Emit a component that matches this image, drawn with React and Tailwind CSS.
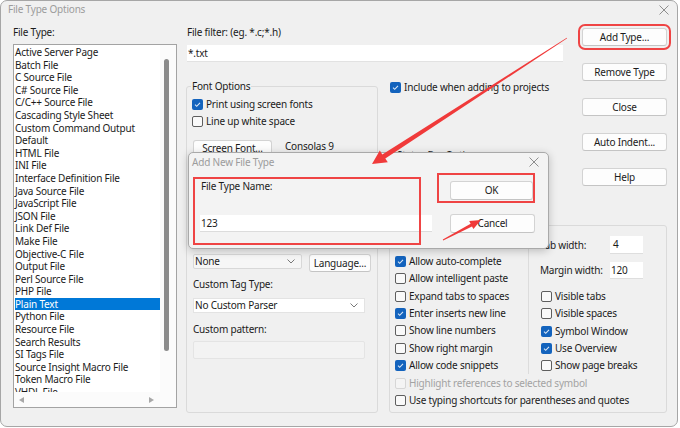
const files = [
  "Active Server Page",
  "Batch File",
  "C Source File",
  "C# Source File",
  "C/C++ Source File",
  "Cascading Style Sheet",
  "Custom Command Output",
  "Default",
  "HTML File",
  "INI File",
  "Interface Definition File",
  "Java Source File",
  "JavaScript File",
  "JSON File",
  "Link Def File",
  "Make File",
  "Objective-C File",
  "Output File",
  "Perl Source File",
  "PHP File",
  "Plain Text",
  "Python File",
  "Resource File",
  "Search Results",
  "SI Tags File",
  "Source Insight Macro File",
  "Token Macro File",
  "VHDL File",
];

const Check = ({ on, disabled }) => {
  if (on)
    return (
      <span className="w-[11px] h-[11px] rounded-[2px] bg-[#1363bd] flex items-center justify-center shrink-0">
        <svg width="9" height="9" viewBox="0 0 9 9">
          <path d="M2 4.7 L3.7 6.3 L7 2.9" fill="none" stroke="#dbe8f7" strokeWidth="1.1" />
        </svg>
      </span>
    );
  return (
    <span
      className={
        disabled
          ? "w-[11px] h-[11px] rounded-[2px] border border-[#d6d6d6] bg-[#f4f4f4] shrink-0"
          : "w-[11px] h-[11px] rounded-[2px] border border-[#5e5e5e] bg-[#f9f9f9] shrink-0"
      }
    />
  );
};

const CheckRow = ({ label, on, disabled, h = "h-[17.3px]" }) => (
  <div className={`flex items-center gap-[3px] ${h} whitespace-nowrap`}>
    <Check on={on} disabled={disabled} />
    <span className={disabled ? "text-[#a3a3a3]" : ""}>{label}</span>
  </div>
);

const Btn = ({ children, className = "" }) => (
  <div
    className={`bg-[#fdfdfd] border border-[#d3d3d3] border-b-[#c4c4c4] rounded-[3px] flex items-center justify-center whitespace-nowrap ${className}`}
  >
    {children}
  </div>
);

const Chevron = () => (
  <svg width="8" height="5" viewBox="0 0 8 5">
    <path d="M0.5 0.5 L4 4 L7.5 0.5" fill="none" stroke="#6a6a6a" strokeWidth="0.9" />
  </svg>
);

const XIcon = () => (
  <svg width="10" height="10" viewBox="0 0 10 10">
    <path d="M0.5 0.5 L9.5 9.5 M9.5 0.5 L0.5 9.5" stroke="#8e8e8e" strokeWidth="1" />
  </svg>
);

export default function App() {
  return (
    <div className="w-[680px] h-[428px] bg-white relative overflow-hidden font-['Noto_Sans',sans-serif] text-[10px] tracking-[-0.2px] leading-[13px] text-[#1b1b1b]">
      <div className="w-[678px] h-[427px] bg-[#f0f0f0] border border-[#a6a6a6] rounded-[7px] flex flex-col">
        {/* title bar */}
        <div className="h-[17px] flex items-center justify-between pl-[7px] pr-[8px] text-[#9c9c9c]">
          <span>File Type Options</span>
          <XIcon />
        </div>

        <div className="flex pl-[12px] pt-[8px]">
          {/* file type list */}
          <div className="w-[164px] flex flex-col">
            <div className="h-[13px]">File Type:</div>
            <div className="mt-[5px] h-[364px] bg-white border border-[#a3a3a3] flex flex-col">
              <div className="flex h-[347px]">
                <div className="w-[146px] pt-[1px] overflow-hidden flex flex-col">
                  {files.map((f) => (
                    <div
                      key={f}
                      className={
                        f === "Plain Text"
                          ? "h-[12.6px] leading-[12.6px] ml-[1px] shrink-0 bg-[#0078d7] text-white whitespace-nowrap"
                          : "h-[12.6px] leading-[12.6px] ml-[1px] shrink-0 whitespace-nowrap"
                      }
                    >
                      {f}
                    </div>
                  ))}
                </div>
                <div className="flex-1 bg-[#fbfbfb] pt-[14px] pl-[4px]">
                  <div className="w-[5px] h-[292px] rounded-full bg-[#8b8b8b]" />
                </div>
              </div>
              <div className="flex-1 bg-[#fbfbfb] flex items-center justify-between pl-[5px] pr-[22px]">
                <svg width="5" height="6" viewBox="0 0 5 6">
                  <path d="M5 0 L0 3 L5 6 Z" fill="#a8a8a8" />
                </svg>
                <svg width="5" height="6" viewBox="0 0 5 6">
                  <path d="M0 0 L5 3 L0 6 Z" fill="#a8a8a8" />
                </svg>
              </div>
            </div>
          </div>

          {/* right side */}
          <div className="ml-[9px] grid grid-cols-[192px_11px_192px_86px] grid-rows-[54px_139px_194px]">
            {/* file filter */}
            <div className="col-start-1 col-end-4 row-start-1 pl-[1px]">
              <div className="h-[13px]">File filter: (eg. *.c;*.h)</div>
              <div className="mt-[6px] w-[376px] h-[17px] bg-white border-b border-[#e2e2e2] flex items-center px-[1px]">
                *.txt
              </div>
            </div>

            {/* buttons */}
            <div className="col-start-4 row-start-1 row-end-3 pt-[2px] pl-[1px] flex flex-col gap-[17px]">
              <Btn className="w-[85px] h-[18px] outline-2 outline-[#ef4444] outline-offset-[2px]">Add Type...</Btn>
              <Btn className="w-[85px] h-[18px]">Remove Type</Btn>
              <Btn className="w-[85px] h-[18px]">Close</Btn>
              <Btn className="w-[85px] h-[18px]">Auto Indent...</Btn>
              <Btn className="w-[85px] h-[18px]">Help</Btn>
            </div>

            {/* font options */}
            <fieldset className="col-start-1 row-start-2 row-end-4 h-[333px] border border-[#dadada] rounded-[3px] pl-[6px] min-w-0">
              <legend className="ml-[-2px] px-[1px] leading-[13px]">Font Options</legend>
              <div className="mt-[3px] ml-[-1px]">
                <CheckRow label="Print using screen fonts" on h="h-[17px]" />
                <CheckRow label="Line up white space" h="h-[17px]" />
              </div>
              <div className="mt-[10px] flex items-center">
                <Btn className="w-[79px] h-[17px]">Screen Font...</Btn>
                <span className="ml-[13px] -mt-[5px]">Consolas 9</span>
              </div>
              <div className="mt-[97px] flex items-start">
                <div className="w-[109px] h-[15px] bg-[#f6f6f6] border border-[#d8d8d8] rounded-[2px] flex items-center justify-between pl-[1px] pr-[6px]">
                  None
                  <Chevron />
                </div>
                <Btn className="ml-[7px] w-[62px] h-[18px]">Language...</Btn>
              </div>
              <div className="mt-[6px] h-[13px]">Custom Tag Type:</div>
              <div className="mt-[7px] w-[172px] h-[15px] bg-white border border-[#e3e3e3] flex items-center justify-between pl-[1px] pr-[6px]">
                No Custom Parser
                <Chevron />
              </div>
              <div className="mt-[10px] h-[13px]">Custom pattern:</div>
              <div className="mt-[5px] w-[172px] h-[18px] bg-[#f3f3f3] border border-[#e4e4e4] rounded-[2px]" />
            </fieldset>

            {/* include + status bar */}
            <div className="col-start-3 row-start-2 pl-[1px]">
              <div className="mt-[1px]">
                <CheckRow label="Include when adding to projects" on h="h-[13px]" />
              </div>
              <fieldset className="mt-[55px] w-[150px] h-[65px] border border-[#dadada] rounded-[3px] pl-[5px]">
                <legend className="px-[1px] leading-[13px]">Status Bar Options</legend>
              </fieldset>
            </div>

            {/* editing options */}
            <fieldset className="col-start-3 col-end-5 row-start-3 h-[194px] border border-[#dadada] rounded-[3px] pl-[5px] min-w-0">
              <legend className="px-[1px] leading-[13px]">Editing Options</legend>
              <div className="flex h-[142.5px]">
                <div className="w-[133px] pt-[21px]">
                  <CheckRow label="Allow auto-complete" on />
                  <CheckRow label="Allow intelligent paste" />
                  <CheckRow label="Expand tabs to spaces" />
                  <CheckRow label="Enter inserts new line" on />
                  <CheckRow label="Show line numbers" />
                  <CheckRow label="Show right margin" />
                  <CheckRow label="Allow code snippets" on />
                </div>
                <div className="w-px bg-[#dcdcdc] mt-[4px] mb-[1px]" />
                <div className="ml-[11px] flex flex-col">
                  <div className="mt-[4px] h-[18px] flex items-center">
                    <span className="w-[70px]">Tab width:</span>
                    <div className="w-[33px] h-[18px] bg-white border-b border-[#dedede] flex items-center px-[3px]">4</div>
                  </div>
                  <div className="mt-[8px] h-[17px] flex items-center">
                    <span className="w-[70px]">Margin width:</span>
                    <div className="w-[33px] h-[17px] bg-white border-b border-[#dedede] flex items-center px-[1px]">120</div>
                  </div>
                  <div className="mt-[9px] ml-[1px]">
                    <CheckRow label="Visible tabs" />
                    <CheckRow label="Visible spaces" />
                    <CheckRow label="Symbol Window" on />
                    <CheckRow label="Use Overview" on />
                    <CheckRow label="Show page breaks" />
                  </div>
                </div>
              </div>
              <CheckRow label="Highlight references to selected symbol" disabled />
              <CheckRow label="Use typing shortcuts for parentheses and quotes" />
            </fieldset>
          </div>
        </div>
      </div>

      {/* Add New File Type dialog */}
      <div className="absolute left-[188px] top-[152px] w-[361px] h-[97px] bg-[#f3f3f3] border border-[#a9a9a9] rounded-[5px] shadow-[0_2px_8px_rgba(0,0,0,0.22)] flex flex-col">
        <div className="h-[18px] flex items-center justify-between pl-[3px] pr-[9px] text-[#9c9c9c]">
          <span>Add New File Type</span>
          <XIcon />
        </div>
        <div className="flex pl-[11px]">
          <div className="w-[232px]">
            <div className="mt-[8.5px] pl-[1px] h-[13px]">File Type Name:</div>
            <div className="mt-[22.5px] h-[17px] bg-white border-b border-[#dcdcdc] flex items-center px-[1px]">123</div>
          </div>
          <div className="ml-[18px] flex flex-col">
            <Btn className="mt-[10px] w-[83px] h-[19px]">OK</Btn>
            <Btn className="mt-[14px] w-[85px] h-[19px]">Cancel</Btn>
          </div>
        </div>
        <div className="absolute left-[4px] top-[24px] w-[228px] h-[68px] border-2 border-[#ef4444]" />
        <div className="absolute left-[248px] top-[20px] w-[98px] h-[30px] border-2 border-[#ef4444]" />
      </div>

      {/* annotation arrows */}
      <svg className="absolute left-0 top-0 pointer-events-none" width="680" height="428" viewBox="0 0 680 428">
        <polygon
          fill="#f03a3a"
          points="567.2,38.3 385.3,158.4 387.8,162.3 372,164 379.8,150.5 382.3,154.4 566.8,37.7"
        />
        <polygon
          fill="#f03a3a"
          points="443.2,240.4 472,226.5 473.4,229.1 481,220 469.2,221.1 470.6,223.7 442.8,239.6"
        />
      </svg>
    </div>
  );
}
